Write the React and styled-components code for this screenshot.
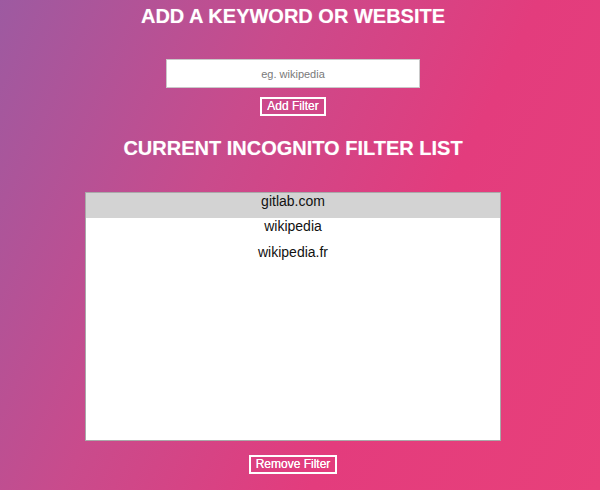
import React from "react";
import styled, { createGlobalStyle } from "styled-components";

const GlobalStyle = createGlobalStyle`
  html, body {
    margin: 0;
    padding: 0;
  }
  body {
    width: 600px;
    height: 490px;
    overflow: hidden;
    font-family: "Liberation Sans", Arial, sans-serif;
    background: linear-gradient(115deg, #9d5aa1 0%, #c94b8c 35%, #e33c7d 65%, #e8407a 100%);
  }
`;

const Page = styled.div`
  width: 586px;
  height: 490px;
  display: flex;
  flex-direction: column;
  align-items: center;
`;

const Heading = styled.h1`
  margin: ${(p) => p.$margin};
  font-size: 20px;
  font-weight: bold;
  color: #fff;
  line-height: 24px;
  text-shadow: 0 0 1px rgba(255, 255, 255, 0.4);
`;

const Input = styled.input`
  box-sizing: border-box;
  width: 254px;
  height: 29px;
  border: 1px solid #c9c9c9;
  background: #fff;
  text-align: center;
  font-family: "Liberation Sans", Arial, sans-serif;
  font-size: 11px;
  outline: none;
  &::placeholder {
    color: #7a7a7a;
  }
`;

const Button = styled.button`
  box-sizing: border-box;
  margin-top: ${(p) => p.$top};
  height: 19px;
  padding: 0 5px;
  background: transparent;
  border: 2px solid #fff;
  color: #fff;
  font-family: "Liberation Sans", Arial, sans-serif;
  font-size: 12px;
  line-height: 15px;
  text-shadow: 0 0 0.5px #fff;
  cursor: pointer;
`;

const List = styled.ul`
  box-sizing: border-box;
  list-style: none;
  margin: 0;
  padding: 0;
  width: 416px;
  height: 249px;
  background: #fff;
  border: 1px solid #a9a9a9;
`;

const Item = styled.li`
  height: ${(p) => (p.$first ? "25px" : "25.5px")};
  text-align: center;
  font-size: 14px;
  line-height: 16px;
  color: #111;
  background: ${(p) => (p.$selected ? "#d3d3d3" : "transparent")};
`;

const filters = ["gitlab.com", "wikipedia", "wikipedia.fr"];

export default function App() {
  return (
    <>
      <GlobalStyle />
      <Page>
        <Heading $margin="4px 0 31px">ADD A KEYWORD OR WEBSITE</Heading>
        <Input placeholder="eg. wikipedia" />
        <Button $top="9px">Add Filter</Button>
        <Heading $margin="20px 0 32px">CURRENT INCOGNITO FILTER LIST</Heading>
        <List>
          {filters.map((f, i) => (
            <Item key={f} $first={i === 0} $selected={i === 0}>
              {f}
            </Item>
          ))}
        </List>
        <Button $top="14px">Remove Filter</Button>
      </Page>
    </>
  );
}
